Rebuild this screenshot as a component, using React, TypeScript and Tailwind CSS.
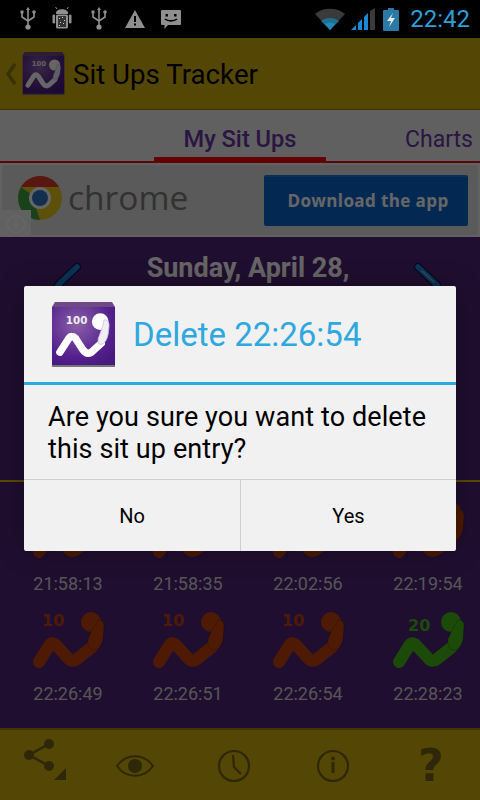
const roboto = { fontFamily: 'Roboto, sans-serif' };

function UsbIcon() {
  return (
    <svg width="20" height="24" viewBox="0 0 20 24" className="block">
      <g stroke="#8f8f8f" strokeWidth="1.6" fill="none">
        <path d="M10 2V20" />
        <path d="M4 6V10L10 14" />
        <path d="M16 6V10L10 14" />
      </g>
      <circle cx="10" cy="20" r="2.6" fill="#8f8f8f" />
      <rect x="2.5" y="3.5" width="3" height="3" fill="#8f8f8f" />
      <circle cx="16" cy="5" r="1.8" fill="#8f8f8f" />
      <path d="M8 3L10 0L12 3Z" fill="#8f8f8f" />
    </svg>
  );
}

function AndroidIcon() {
  return (
    <svg width="20" height="24" viewBox="0 0 20 24" className="block">
      <path d="M4 6C4 1 16 1 16 6V7H4Z" fill="#8f8f8f" />
      <path d="M5 2L3.5 0M15 2L16.5 0" stroke="#8f8f8f" strokeWidth="1" />
      <rect x="4" y="7.5" width="12" height="14" rx="1.5" fill="#8f8f8f" />
      <rect x="0.5" y="7.5" width="2.6" height="9" rx="1.3" fill="#8f8f8f" />
      <rect x="16.9" y="7.5" width="2.6" height="9" rx="1.3" fill="#8f8f8f" />
      <rect x="6" y="9" width="8" height="11" fill="#333" />
      <path d="M7 11h1v1H7zM10 10h1v1h-1zM12 13h1v1h-1zM8 15h1v1H8zM11 16h1v1h-1zM7 18h1v1H7z" fill="#ccc" />
    </svg>
  );
}

function StatusIcons() {
  return (
    <div className="flex items-center pl-[18px]">
      <UsbIcon />
      <div className="ml-[14px]"><AndroidIcon /></div>
      <div className="ml-[17px]"><UsbIcon /></div>
      <svg width="20" height="18" viewBox="0 0 20 18" className="ml-[16px] block">
        <path d="M10 0L20 18H0Z" fill="#8f8f8f" />
        <rect x="9" y="6" width="2" height="6" fill="#000" />
        <rect x="9" y="13.5" width="2" height="2" fill="#000" />
      </svg>
      <svg width="20" height="20" viewBox="0 0 20 20" className="ml-[16px] mt-[2px] block">
        <path d="M1 0H19A1 1 0 0 1 20 1V14A1 1 0 0 1 19 15H7L3.5 19V15H1A1 1 0 0 1 0 14V1A1 1 0 0 1 1 0Z" fill="#8f8f8f" />
        <rect x="4.5" y="4" width="2.5" height="2.5" fill="#000" />
        <rect x="13" y="4" width="2.5" height="2.5" fill="#000" />
        <path d="M4 9C7 11.5 13 11.5 16 9" stroke="#000" strokeWidth="1.6" fill="none" />
      </svg>
    </div>
  );
}

function StatusRight() {
  return (
    <div className="flex items-center pr-[10px]">
      <svg width="30" height="23" viewBox="0 0 30 23" className="block">
        <path d="M15 22L0 6C8 -1 22 -1 30 6Z" fill="#3a3a3a" />
        <path d="M15 22L6 13C11 9 19 9 24 13Z" fill="#1f6f94" />
        <path d="M15 22L10 16C13 14 17 14 20 16Z" fill="#2388b4" />
      </svg>
      <svg width="24" height="23" viewBox="0 0 24 23" className="ml-[6px] block">
        <path d="M0 22L5 17V22Z" fill="#1a8ad4" />
        <path d="M7 15L11 11V22H7Z" fill="#1a8ad4" />
        <path d="M13 9L17 5V22H13Z" fill="#1a8ad4" />
        <path d="M19 3L24 0V22H19Z" fill="#3a3a3a" />
      </svg>
      <svg width="16" height="23" viewBox="0 0 16 23" className="ml-[8px] block">
        <rect x="5" y="0" width="6" height="2" fill="#2a7aa5" />
        <rect x="0" y="2" width="16" height="21" rx="1" fill="#2a7aa5" />
        <path d="M10 5L4 13H8L6 19L12 10H8Z" fill="#e8e8e8" />
      </svg>
      <span className="ml-[11px] text-[24px] leading-[38px] text-[#2e9fd8]" style={roboto}>22:42</span>
    </div>
  );
}

function AppLogo({ id, size }: { id: string; size: number }) {
  return (
    <svg width={size} height={size} viewBox="0 0 64 66" className="block shrink-0">
      <defs>
        <radialGradient id={id} cx="0.4" cy="0.3" r="0.8">
          <stop offset="0" stopColor="#8a60a8" />
          <stop offset="0.7" stopColor="#53208c" />
          <stop offset="1" stopColor="#46197c" />
        </radialGradient>
      </defs>
      <path d="M3 0H61L64 5H0Z" fill="#6d4a86" />
      <rect x="0" y="5" width="64" height="60" fill={`url(#${id})`} />
      <rect x="0" y="64" width="64" height="2" fill="#777" />
      <text x="14" y="22" fontSize="10.5" fontWeight="700" fill="#eee" fontFamily="'DejaVu Sans', sans-serif">100</text>
      <circle cx="49" cy="20" r="8.5" fill="#fff" />
      <path d="M8 51L17 37Q20 33 24 37L31 48Q35 54 40 51L50 42" stroke="#fff" strokeWidth="7.5" strokeLinecap="round" strokeLinejoin="round" fill="none" />
      <path d="M53 18Q58 18 58 24L57 33Q55 42 50 43Q46 43 47 37L51 26Z" fill="#f2eef6" stroke="#cbbcd8" strokeWidth="0.8" />
    </svg>
  );
}

function ChromeLogo() {
  return (
    <svg width="46" height="46" viewBox="-23 -23 46 46" className="block shrink-0">
      <circle r="22" fill="#e8c81a" />
      <path d="M0 -22A22 22 0 0 1 19 -11L9 6L0 0Z" fill="#e8c81a" />
      <path d="M-19 -11A22 22 0 0 1 19 -11H0Z" fill="#dc3b2c" />
      <path d="M-19 -11L-8 -3L0 22A22 22 0 0 1 -19 -11Z" fill="#3fa648" />
      <circle r="11" fill="#fff" />
      <circle r="8" fill="#3474c8" />
    </svg>
  );
}

function SitUp({ count, color }: { count: number; color: string }) {
  const big = count > 10;
  return (
    <svg width="120" height="86" viewBox="0 0 120 86" className="block">
      <text x={big ? 48 : 42} y={big ? 36 : 31} fontSize="16" fontWeight="700" fill={color} fontFamily="'DejaVu Sans', sans-serif">{count}</text>
      <circle cx="91" cy="27" r="10" fill={color} />
      <path d="M39 67L49 51Q52 46 56 50L68 63Q72 68 77 64L92 52" stroke={color} strokeWidth="12" strokeLinecap="round" strokeLinejoin="round" fill="none" />
      <path d="M98 25Q104 24 104 31L103 45Q100 56 93 55Q87 53 88 44L92 35Z" fill={color} stroke="#000" strokeOpacity="0.2" strokeWidth="1" />
    </svg>
  );
}

const ENTRIES = [
  { time: '21:58:13', count: 10, color: '#c44308' },
  { time: '21:58:35', count: 10, color: '#c44308' },
  { time: '22:02:56', count: 10, color: '#c44308' },
  { time: '22:19:54', count: 10, color: '#c44308' },
  { time: '22:26:49', count: 10, color: '#c44308' },
  { time: '22:26:51', count: 10, color: '#c44308' },
  { time: '22:26:54', count: 10, color: '#c44308' },
  { time: '22:28:23', count: 20, color: '#46b814' },
];

function BottomBar() {
  const c = '#73621a';
  return (
    <div className="h-[72px] shrink-0 border-t-2 border-[#a58a08] bg-[#d2ae0a] flex items-center pl-[10px] pt-[1px]">
      <svg width="60" height="60" viewBox="0 0 60 60" className="block">
        <path d="M39 8L19 19L39 30" stroke={c} strokeWidth="2.5" fill="none" />
        <circle cx="39" cy="8" r="5" fill={c} />
        <circle cx="19" cy="19" r="5" fill={c} />
        <circle cx="39" cy="30" r="5" fill={c} />
        <path d="M44 44H56V32Z" fill={c} />
      </svg>
      <svg width="60" height="60" viewBox="0 0 60 60" className="ml-[35px] block">
        <path d="M12 30C21 17 39 17 48 30C39 43 21 43 12 30Z" stroke={c} strokeWidth="2" fill="none" />
        <circle cx="30" cy="30" r="7" fill={c} />
      </svg>
      <svg width="60" height="60" viewBox="0 0 60 60" className="ml-[39px] block">
        <circle cx="30" cy="30" r="15" stroke={c} strokeWidth="2.2" fill="none" />
        <path d="M29 19L30 31L37 38" stroke={c} strokeWidth="2.2" fill="none" />
      </svg>
      <svg width="60" height="60" viewBox="0 0 60 60" className="ml-[39px] block">
        <circle cx="30" cy="30" r="15" stroke={c} strokeWidth="2.2" fill="none" />
        <circle cx="30" cy="22.5" r="2" fill={c} />
        <rect x="28.5" y="26" width="3" height="11" fill={c} />
      </svg>
      <span className="ml-[55px] text-[44px] font-bold leading-none text-[#73621a]" style={{ fontFamily: "'DejaVu Sans', sans-serif" }}>?</span>
    </div>
  );
}

export default function App() {
  return (
    <div className="relative w-[480px] h-[800px] overflow-hidden flex flex-col bg-black">
      <div className="h-[38px] shrink-0 bg-black flex items-center justify-between">
        <StatusIcons />
        <StatusRight />
      </div>

      <div className="h-[72px] shrink-0 bg-[#d2ae0a] border-b border-[#9c8208] flex items-center pl-[6px]">
        <svg width="11" height="22" viewBox="0 0 11 22" className="block">
          <path d="M9 1L2 11L9 21" stroke="#8f7a14" strokeWidth="3.5" fill="none" />
        </svg>
        <div className="ml-[5px]"><AppLogo id="bar-logo" size={43} /></div>
        <span className="ml-[8px] mt-[3px] text-[27.7px] text-black" style={roboto}>Sit Ups Tracker</span>
      </div>

      <div className="relative h-[53px] shrink-0 bg-[#f0f0f0] border-b-2 border-[#e01010]" style={roboto}>
        <div className="flex h-[51px]">
          <div className="ml-[154px] w-[172px] h-[52px] border-b-[5px] border-[#ff0000] text-center text-[23.6px] font-medium leading-[58px] text-[#6a35a8]">My Sit Ups</div>
          <div className="ml-[79px] text-[23px] leading-[60px] text-[#6a35a8]">Charts</div>
        </div>
      </div>

      <div className="relative h-[74px] shrink-0 bg-[#e0e0e0] border-2 border-[#f4f4f4] flex items-center pl-[15px] pr-[10px]">
        <div className="-mt-[4px]"><ChromeLogo /></div>
        <span className="ml-[5px] -mt-[4px] text-[33.5px] leading-none text-[#7e7e7e]" style={{ fontFamily: "'Open Sans', sans-serif" }}>chrome</span>
        <div className="ml-auto w-[204px] h-[51px] pl-[4px] rounded-[2px] border-t-2 border-[#1a78dc] bg-[#0868d0] flex items-center justify-center text-[17px] font-bold tracking-[0.4px] text-white" style={{ fontFamily: "'Open Sans', sans-serif" }}>Download the app</div>
        <div className="absolute -left-[2px] -bottom-[2px] w-[31px] h-[27px] bg-[#f2f2f2] flex items-center justify-center">
          <svg width="20" height="20" viewBox="0 0 20 20" className="block">
            <circle cx="10" cy="10" r="8.5" stroke="#fff" strokeWidth="1.5" fill="none" />
            <circle cx="10" cy="6" r="1.3" fill="#fff" />
            <rect x="8.8" y="8.5" width="2.4" height="6.5" fill="#fff" />
          </svg>
        </div>
      </div>

      <div className="flex-1 bg-[#502378]" style={roboto}>
        <div className="h-[243px] flex pl-[55px] pr-[40px] pt-[15px]">
          <svg width="25" height="45" viewBox="0 0 25 45" className="block shrink-0 mt-[12px] overflow-visible">
            <path d="M22 3L3 21L22 42" stroke="#0a1c40" strokeWidth="8" strokeLinecap="round" strokeLinejoin="round" fill="none" />
            <path d="M22 3L3 21L22 42" stroke="#1f80e0" strokeWidth="5.5" strokeLinecap="round" strokeLinejoin="round" fill="none" />
          </svg>
          <div className="ml-[43px] w-[250px] text-center text-[27px] font-bold leading-[32px] text-white">Sunday, April 28,<br />2013</div>
          <svg width="25" height="45" viewBox="0 0 25 45" className="block shrink-0 mt-[12px] ml-auto overflow-visible">
            <path d="M3 3L22 21L3 42" stroke="#0a1c40" strokeWidth="8" strokeLinecap="round" strokeLinejoin="round" fill="none" />
            <path d="M3 3L22 21L3 42" stroke="#1f80e0" strokeWidth="5.5" strokeLinecap="round" strokeLinejoin="round" fill="none" />
            <path d="M7 7L19 18" stroke="#7cc0f0" strokeWidth="1.5" strokeLinecap="round" fill="none" />
          </svg>
        </div>
        <div className="h-[2px] bg-[#e0b810]" />
        <div className="grid grid-cols-4 pt-[3px]">
          {ENTRIES.map(entry => (
            <div key={entry.time} className="h-[110px]">
              <SitUp count={entry.count} color={entry.color} />
              <div className="pl-[16px] pt-[1px] text-center text-[18px] leading-[24px] text-[#d5d5d5]">{entry.time}</div>
            </div>
          ))}
        </div>
      </div>

      <BottomBar />

      <div className="absolute inset-x-0 top-[38px] bottom-0 bg-black/60">
        <div className="absolute left-[24px] top-[248px] w-[432px] h-[265px] rounded-[2px] bg-[#f1f1f1] shadow-[0_0_24px_rgba(0,0,0,0.35)] flex flex-col" style={roboto}>
          <div className="h-[96px] shrink-0 flex items-center pl-[27px]">
            <AppLogo id="dialog-logo" size={65} />
            <span className="ml-[17px] mt-[1px] text-[33px] text-[#2ea8df]">Delete 22:26:54</span>
          </div>
          <div className="h-[3px] shrink-0 bg-[#2ea8df]" />
          <div className="h-[94px] shrink-0 pl-[24px] pt-[16px] text-[27px] tracking-[0.1px] leading-[32px] text-black">
            Are you sure you want to delete<br />this sit up entry?
          </div>
          <div className="flex flex-1 border-t border-[#cfcfcf]">
            <div className="w-[217px] border-r border-[#cfcfcf] flex items-center justify-center text-[20px] text-black">No</div>
            <div className="flex-1 flex items-center justify-center text-[20px] text-black">Yes</div>
          </div>
        </div>
      </div>
    </div>
  );
}
